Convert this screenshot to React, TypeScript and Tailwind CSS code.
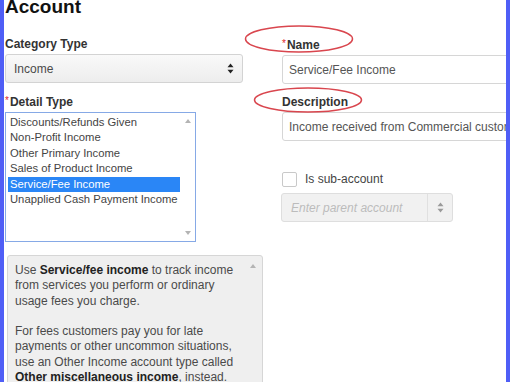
const detailTypes = [
  'Discounts/Refunds Given',
  'Non-Profit Income',
  'Other Primary Income',
  'Sales of Product Income',
  'Service/Fee Income',
  'Unapplied Cash Payment Income',
]

function UpDown({ color = '#222' }: { color?: string }) {
  return (
    <svg width="7" height="11" viewBox="0 0 7 11" fill={color}>
      <path d="M3.5 0.5 L6.5 4.2 L0.5 4.2 Z" />
      <path d="M3.5 10.5 L6.5 6.8 L0.5 6.8 Z" />
    </svg>
  )
}

function Label({ text, required }: { text: string; required?: boolean }) {
  return (
    <p className="text-[12px] font-bold leading-[14px] text-[#333]">
      {required && <span className="mr-[1px] align-[2px] text-[10px] font-normal text-[#e0262a]">*</span>}
      {text}
    </p>
  )
}

export default function App() {
  return (
    <div className="flex h-[382px] w-[510px] overflow-hidden bg-white font-['Liberation_Sans',Arial,sans-serif] text-[#333]">
      <div className="w-[4px] shrink-0 bg-[#4f5ef6]" />

      <div className="relative flex-1 overflow-hidden pl-[1px]">
        <h1 className="-mt-[3px] text-[19px] font-bold leading-[19px] text-[#111]">Account</h1>

        <div className="mt-[21px] flex gap-[39px]">
          {/* left column */}
          <div className="w-[238px] shrink-0">
            <Label text="Category Type" />
            <div className="mt-[3px] flex h-[29px] items-center justify-between rounded-[3px] border border-[#d3d3d3] bg-gradient-to-b from-[#f9f9f9] to-[#ededed] px-[8px]">
              <span className="text-[12px] text-[#4a4a4a]">Income</span>
              <UpDown />
            </div>

            <div className="mt-[11px]">
              <Label text="Detail Type" required />
            </div>
            <div className="mt-[3px] flex h-[130px] w-[191px] border border-[#86a9e6] bg-white">
              <ul className="flex-1 pl-[2px] pt-[2px]">
                {detailTypes.map((t) => (
                  <li
                    key={t}
                    className={`whitespace-nowrap pl-[2px] text-[11.25px] leading-[15.4px] ${
                      t === 'Service/Fee Income' ? 'bg-[#2a86f6] text-white' : 'text-[#444]'
                    }`}
                  >
                    {t}
                  </li>
                ))}
              </ul>
              <div className="flex w-[15px] flex-col items-center justify-between py-[6px]">
                <svg width="6" height="4" viewBox="0 0 6 4" fill="#b4b4b4"><path d="M3 0 L6 4 L0 4 Z" /></svg>
                <svg width="6" height="4" viewBox="0 0 6 4" fill="#b4b4b4"><path d="M3 4 L6 0 L0 0 Z" /></svg>
              </div>
            </div>

            <div className="relative ml-[2px] mt-[13px] h-[200px] w-[256px] rounded-[3px] border border-[#d6d6d6] bg-[#efefef] pl-[7px] pt-[7px] text-[12px] leading-[15.3px] text-[#4a4a4a]">
              <svg className="absolute right-[6px] top-[8px]" width="6" height="4" viewBox="0 0 6 4" fill="#b4b4b4"><path d="M3 0 L6 4 L0 4 Z" /></svg>
              <p>
                Use <b className="font-bold text-[#222]">Service/fee income</b> to track income
                <br />
                from services you perform or ordinary
                <br />
                usage fees you charge.
              </p>
              <p className="mt-[15.3px]">
                For fees customers pay you for late
                <br />
                payments or other uncommon situations,
                <br />
                use an Other Income account type called
                <br />
                <b className="font-bold text-[#222]">Other miscellaneous income</b>, instead.
              </p>
            </div>
          </div>

          {/* right column */}
          <div className="min-w-0 flex-1">
            <Label text="Name" required />
            <div className="mt-[3px] flex h-[29px] w-[260px] items-center whitespace-nowrap rounded-[3px] border border-[#d6d6d6] px-[6px] text-[12px] text-[#555]">
              Service/Fee Income
            </div>

            <div className="mt-[11px]">
              <Label text="Description" />
            </div>
            <div className="mt-[3px] flex h-[29px] w-[260px] items-center whitespace-nowrap rounded-[3px] border border-[#d6d6d6] px-[6px] text-[12px] text-[#555]">
              Income received from Commercial customers
            </div>

            <div className="mt-[29px] flex items-center">
              <div className="h-[15px] w-[15px] rounded-[2px] border border-[#c9c9c9] bg-white" />
              <span className="ml-[8px] text-[12px] text-[#444]">Is sub-account</span>
            </div>

            <div className="-ml-[1px] mt-[5px] flex h-[29px] w-[172px] rounded-[3px] border border-[#dedede] bg-[#f1f1f1]">
              <div className="flex flex-1 items-center pl-[9px] text-[12px] italic text-[#bcbcbc]">Enter parent account</div>
              <div className="flex w-[25px] items-center justify-center border-l border-[#e0e0e0]">
                <UpDown color="#9a9a9a" />
              </div>
            </div>
          </div>
        </div>

        {/* red annotation circles */}
        <svg className="pointer-events-none absolute left-[240px] top-[24px]" width="110" height="30" viewBox="0 0 110 30">
          <ellipse cx="55" cy="15" rx="53.5" ry="13" fill="none" stroke="#d9464e" strokeWidth="1.5" />
        </svg>
        <svg className="pointer-events-none absolute left-[249px] top-[86px]" width="110" height="28" viewBox="0 0 110 28">
          <ellipse cx="55" cy="14" rx="53.5" ry="12" fill="none" stroke="#d9464e" strokeWidth="1.5" />
        </svg>
      </div>

      <div className="w-[4px] shrink-0 bg-[#4f5ef6]" />
    </div>
  )
}
